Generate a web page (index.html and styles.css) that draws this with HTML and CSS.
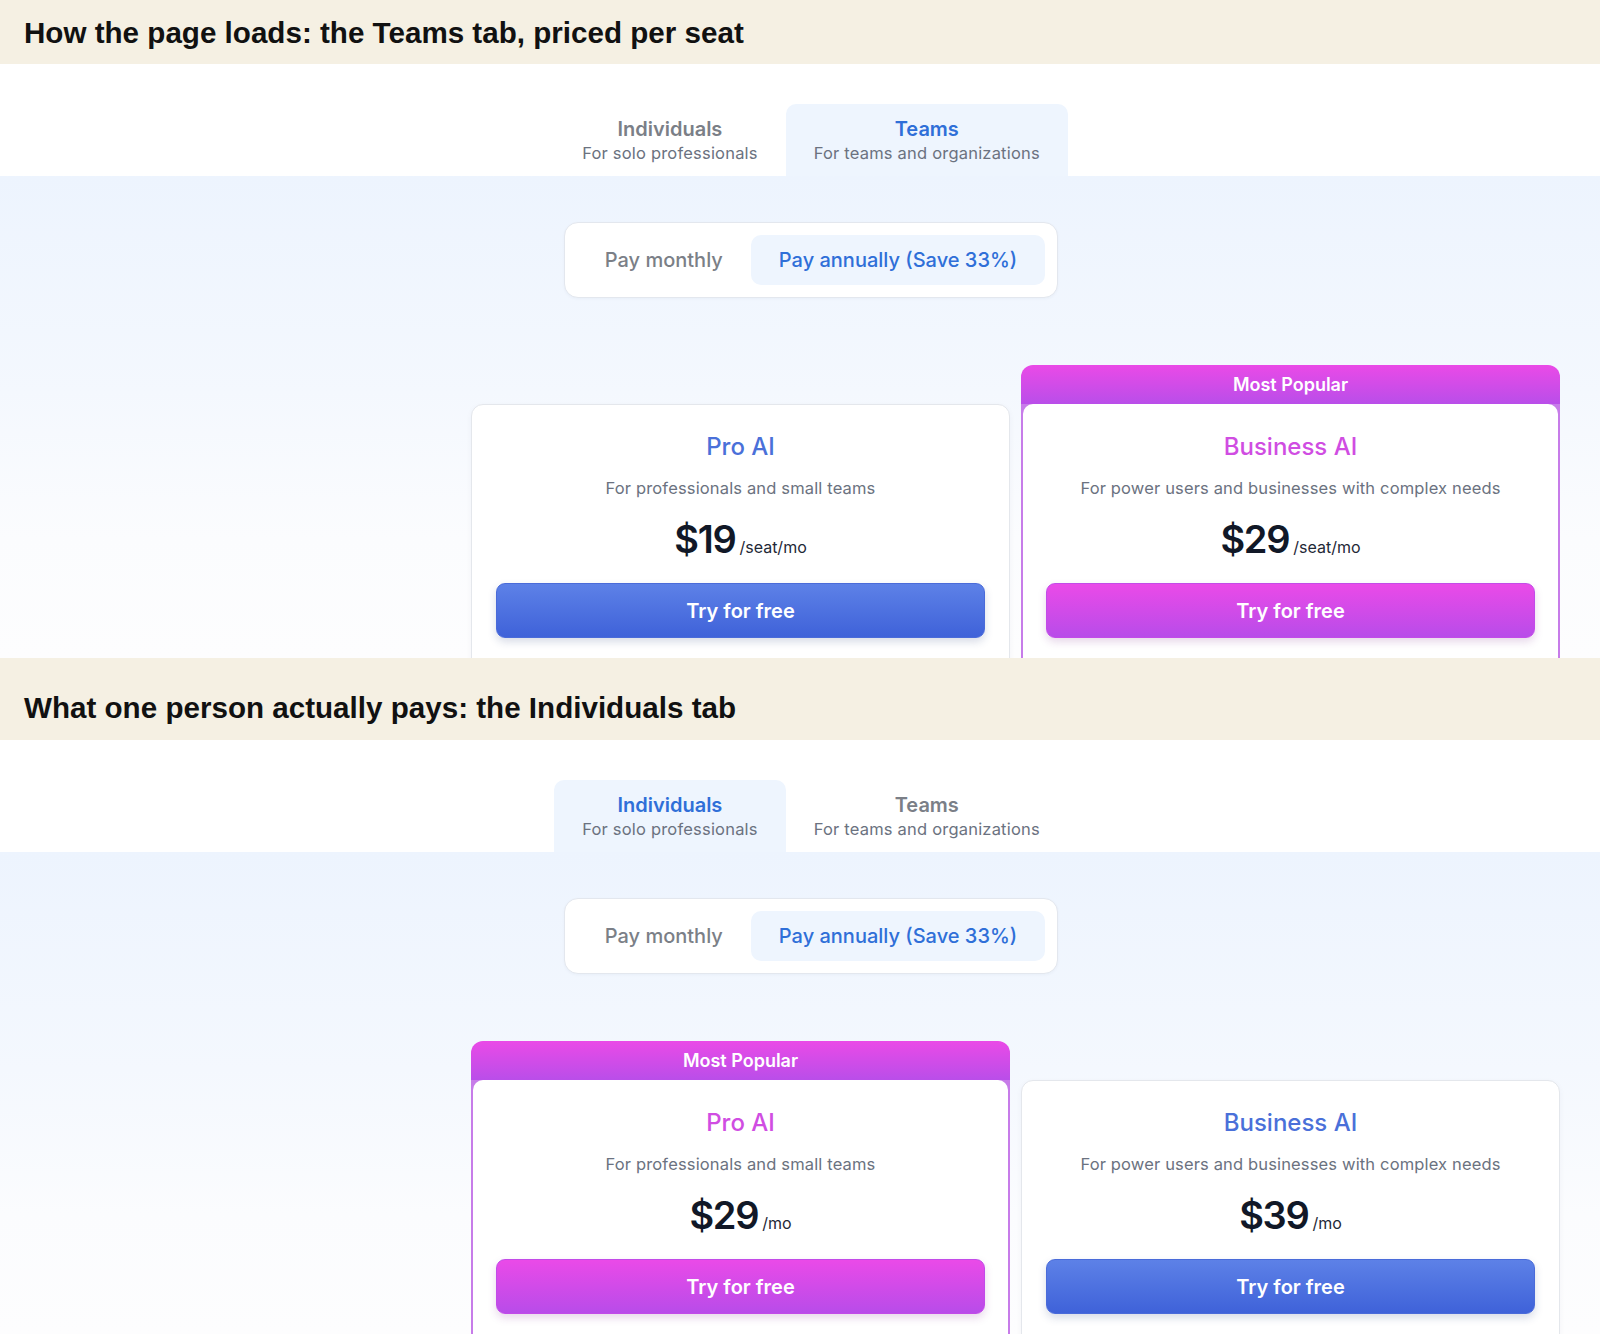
FILE: index.html
```html
<!DOCTYPE html>
<html lang="en">
<head>
<meta charset="utf-8">
<title>Pricing</title>
<link rel="stylesheet" href="styles.css">
</head>
<body>
<section class="shot">
  <div class="band band-first"><h2>How the page loads: the Teams tab, priced per seat</h2></div>
  <div class="page">
    <div class="tabs-wrap">
      <div class="tabs">
        <div class="tab"><div class="tab-title">Individuals</div><div class="tab-sub">For solo professionals</div></div>
        <div class="tab active"><div class="tab-title">Teams</div><div class="tab-sub">For teams and organizations</div></div>
      </div>
    </div>
    <div class="pricing">
      <div class="toggle-row">
        <div class="toggle">
          <div class="opt">Pay monthly</div>
          <div class="opt on">Pay annually (Save 33%)</div>
        </div>
      </div>
      <div class="plans">
        <div class="card">
          <h3 class="plan-name">Pro AI</h3>
          <p class="plan-desc">For professionals and small teams</p>
          <div class="price"><span class="amt">$19</span><span class="per">/seat/mo</span></div>
          <div class="btn">Try for free</div>
        </div>
        <div class="popular">
          <div class="ribbon">Most Popular</div>
          <div class="card card-pop">
            <h3 class="plan-name">Business AI</h3>
            <p class="plan-desc">For power users and businesses with complex needs</p>
            <div class="price"><span class="amt">$29</span><span class="per">/seat/mo</span></div>
            <div class="btn btn-pop">Try for free</div>
          </div>
        </div>
      </div>
    </div>
  </div>
</section>
<section class="shot">
  <div class="band band-second"><h2>What one person actually pays: the Individuals tab</h2></div>
  <div class="page">
    <div class="tabs-wrap">
      <div class="tabs">
        <div class="tab active"><div class="tab-title">Individuals</div><div class="tab-sub">For solo professionals</div></div>
        <div class="tab"><div class="tab-title">Teams</div><div class="tab-sub">For teams and organizations</div></div>
      </div>
    </div>
    <div class="pricing">
      <div class="toggle-row">
        <div class="toggle">
          <div class="opt">Pay monthly</div>
          <div class="opt on">Pay annually (Save 33%)</div>
        </div>
      </div>
      <div class="plans">
        <div class="popular">
          <div class="ribbon">Most Popular</div>
          <div class="card card-pop">
            <h3 class="plan-name">Pro AI</h3>
            <p class="plan-desc">For professionals and small teams</p>
            <div class="price"><span class="amt">$29</span><span class="per">/mo</span></div>
            <div class="btn btn-pop">Try for free</div>
          </div>
        </div>
        <div class="card">
          <h3 class="plan-name">Business AI</h3>
          <p class="plan-desc">For power users and businesses with complex needs</p>
          <div class="price"><span class="amt">$39</span><span class="per">/mo</span></div>
          <div class="btn">Try for free</div>
        </div>
      </div>
    </div>
  </div>
</section>
</body>
</html>
```

FILE: styles.css
```css
* { box-sizing: border-box; }
html, body { margin: 0; padding: 0; }
body {
  width: 1600px;
  height: 1334px;
  overflow: hidden;
  background: #ffffff;
  font-family: Inter, "Noto Sans", sans-serif;
}

.band {
  background: #f5f0e3;
  padding: 0 24px;
}
.band h2 {
  margin: 0;
  font-family: "Liberation Sans", Arial, sans-serif;
  font-weight: 700;
  font-size: 29.6px;
  line-height: 34px;
  color: #111111;
}
.band-first { padding-top: 16px; padding-bottom: 14px; }
.band-second { padding-top: 33px; padding-bottom: 15px; }

.page {
  height: 594px;
  overflow: hidden;
}

.tabs-wrap {
  background: #ffffff;
  padding-top: 40px;
  padding-left: 22px;
  display: flex;
  justify-content: center;
}
.tabs { display: flex; }
.tab {
  height: 72px;
  padding: 13px 28px 0;
  text-align: center;
  border-radius: 10px 10px 0 0;
}
.tab.active { background: #eef5fe; }
.tab-title {
  font-size: 20px;
  line-height: 24px;
  font-weight: 600;
  color: #7b7f87;
}
.tab.active .tab-title { color: #2f6fd8; }
.tab-sub {
  font-size: 16.5px;
  line-height: 24px;
  color: #6b7280;
  letter-spacing: 0.2px;
}

.pricing {
  height: 482px;
  background: linear-gradient(180deg, #edf4fe 0%, #f4f8fe 45%, #fbfcfe 75%, #fdfdfe 100%);
  padding-top: 46px;
}
.toggle-row {
  display: flex;
  justify-content: center;
  padding-left: 22px;
}
.toggle {
  display: flex;
  padding: 12px;
  background: #ffffff;
  border: 1px solid #e3e7ee;
  border-radius: 14px;
  box-shadow: 0 1px 3px rgba(30, 50, 90, 0.04);
}
.opt {
  height: 50px;
  padding: 0 28px;
  display: flex;
  align-items: center;
  font-size: 20px;
  font-weight: 500;
  color: #7b7f87;
  border-radius: 10px;
}
.opt.on {
  background: #eef5fe;
  color: #2f6fd8;
}

.plans {
  display: flex;
  align-items: flex-end;
  gap: 11px;
  margin-top: 67px;
  padding-left: 471px;
}
.card {
  width: 539px;
  height: 330px;
  background: #ffffff;
  border: 1px solid #e4e7ec;
  border-radius: 12px;
  padding: 26px 24px 0;
  display: flex;
  flex-direction: column;
  align-items: center;
  text-align: center;
  box-shadow: 0 2px 6px rgba(30, 50, 90, 0.04);
}
.popular {
  width: 539px;
  border-radius: 12px;
  padding: 0 2px;
  background: linear-gradient(180deg, #ea4ae7 0px, #b94ee9 39px, #c77ce9 39px, #c77ce9 100%);
}
.ribbon {
  height: 39px;
  display: flex;
  align-items: center;
  justify-content: center;
  color: #ffffff;
  font-size: 18px;
  font-weight: 600;
}
.card-pop {
  width: 100%;
  border: none;
  border-radius: 10px 10px 0 0;
  padding: 27px 23px 0;
  box-shadow: none;
}

.plan-name {
  margin: 0;
  font-size: 24px;
  line-height: 32px;
  font-weight: 500;
  color: #4a70d9;
}
.card-pop .plan-name { color: #d04de2; }
.plan-desc {
  margin: 13px 0 0;
  font-size: 16.5px;
  line-height: 24px;
  color: #6b7280;
  letter-spacing: 0.15px;
}
.price {
  margin-top: 15px;
  height: 48px;
  display: flex;
  align-items: baseline;
  justify-content: center;
  color: #111827;
}
.amt {
  font-size: 38px;
  line-height: 48px;
  font-weight: 600;
  letter-spacing: -1.3px;
}
.per {
  font-size: 16px;
  margin-left: 4px;
  color: #1f2937;
}
.btn {
  margin-top: 20px;
  width: 100%;
  height: 55px;
  display: flex;
  align-items: center;
  justify-content: center;
  border-radius: 9px;
  background: linear-gradient(180deg, #5d81e7 0%, #3f62d9 100%);
  border: 1px solid #4a6bd9;
  color: #ffffff;
  font-size: 20px;
  font-weight: 600;
  box-shadow: 0 4px 8px rgba(40, 60, 120, 0.18);
}
.btn-pop {
  background: linear-gradient(180deg, #ea4ae8 0%, #b84ce9 100%);
  border-color: #c24be8;
  box-shadow: 0 4px 8px rgba(120, 40, 140, 0.18);
}
```
